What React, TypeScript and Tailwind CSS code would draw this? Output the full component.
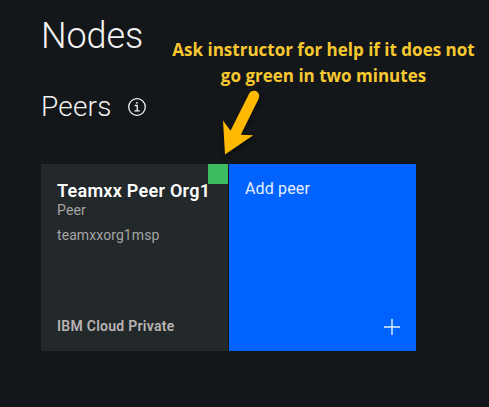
import React from "react";

function InfoIcon() {
  return (
    <svg width="18" height="18" viewBox="0 0 18 18" fill="none" stroke="#f3f3f3" strokeWidth="1.3">
      <circle cx="9" cy="9" r="8.3" />
      <path d="M6.7 7.5H9.2V12.9M6.4 12.9H11.8" />
      <circle cx="8.9" cy="4.8" r="0.9" fill="#f3f3f3" stroke="none" />
    </svg>
  );
}

function PeerCard() {
  return (
    <div className="relative flex h-[187px] w-[187px] flex-col bg-[#23282b] pl-4 whitespace-nowrap">
      <div className="absolute top-0 right-0 h-5 w-5 bg-[#3dbb61]" />
      <div className="mt-[15px] h-6 text-[18px] leading-6 font-semibold tracking-[0.27px] text-white">Teamxx Peer Org1</div>
      <div className="-mt-px h-4 text-[14px] leading-4 tracking-[0.15px] text-[#a5a5a5]">Peer</div>
      <div className="mt-[7px] h-5 text-[14px] leading-5 tracking-[0.08px] text-[#a5a5a5]">teamxxorg1msp</div>
      <div className="mt-auto mb-[15px] h-5 text-[14px] leading-5 font-semibold tracking-[0.27px] text-[#b9b5b4]">IBM Cloud Private</div>
    </div>
  );
}

function AddPeerCard() {
  return (
    <div className="flex h-[187px] w-[187px] flex-col justify-between bg-[#0062ff] pl-4">
      <div className="mt-[13px] h-6 text-[16px] leading-6 tracking-[0.15px] text-[#e6efff]">Add peer</div>
      <svg className="mr-4 mb-4 self-end" width="16" height="16" viewBox="0 0 16 16" stroke="#e6efff" strokeWidth="1.4">
        <path d="M8 0V16M0 8H16" />
      </svg>
    </div>
  );
}

function Annotation() {
  return (
    <>
      <div className="absolute top-[37px] left-[163px] w-[321px] text-center font-['Open_Sans',sans-serif] text-[17px] leading-[26px] font-bold whitespace-nowrap text-[#f8c830]">
        <div>Ask instructor for help if it does not</div>
        <div>go green in two minutes</div>
      </div>
      <svg className="absolute top-[85px] left-[215px] drop-shadow-[0_2px_2px_rgba(0,0,0,0.6)]" width="50" height="75" viewBox="215 85 50 75">
        <path fill="#ffb900" d="M249.2 93.6C251 90 255 90 257.5 92C259.5 93.5 259.7 96.5 258.5 99L240.8 134.7L253.3 135.2L225 154.5L223 120.5L230.5 130.8Z" />
      </svg>
    </>
  );
}

export default function App() {
  return (
    <main className="relative h-[407px] w-[489px] overflow-hidden bg-[#13171a] pl-[41px] font-['Roboto',sans-serif]">
      <h1 className="pt-[13px] text-[36px] leading-[46px] font-light tracking-[-0.1px] text-[#f3f3f3]">Nodes</h1>
      <div className="mt-[30px] flex h-9 items-center gap-4">
        <h2 className="text-[28px] leading-9 font-light tracking-[0.2px] text-[#f3f3f3]">Peers</h2>
        <InfoIcon />
      </div>
      <div className="mt-[39px] flex gap-px">
        <PeerCard />
        <AddPeerCard />
      </div>
      <Annotation />
    </main>
  );
}
